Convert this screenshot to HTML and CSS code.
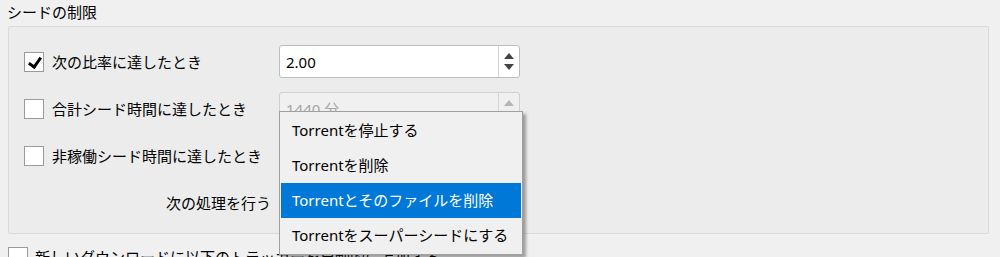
FILE: index.html
```html
<!DOCTYPE html>
<html lang="ja">
<head>
  <meta charset="UTF-8" />
  <title>シードの制限</title>
  <link rel="stylesheet" href="styles.css">
</head>
<body>

  <div class="page">
    <div class="section-title">シードの制限</div>

    <div class="groupbox">
      <div class="grid">
        <label class="check">
          <span class="box checked"></span>
          <span>次の比率に達したとき</span>
        </label>
        <div class="spin">
          <span class="spin-value">2.00</span>
          <span class="spin-arrows">
            <span class="arrow up"></span>
            <span class="arrow down"></span>
          </span>
        </div>

        <label class="check">
          <span class="box"></span>
          <span>合計シード時間に達したとき</span>
        </label>
        <div class="spin disabled">
          <span class="spin-value">1440 分</span>
          <span class="spin-arrows">
            <span class="arrow up"></span>
            <span class="arrow down"></span>
          </span>
        </div>

        <label class="check">
          <span class="box"></span>
          <span>非稼働シード時間に達したとき</span>
        </label>
        <!-- covered by the open dropdown -->
        <div class="spin disabled"></div>

        <div class="action-label">次の処理を行う</div>
        <div class="combo"></div>
      </div>
    </div>

    <label class="check outer">
      <span class="box"></span>
      <span>新しいダウンロードに以下のトラッカーを自動的に追加する</span>
    </label>

    <ul class="popup">
      <li>Torrentを停止する</li>
      <li>Torrentを削除</li>
      <li class="selected">Torrentとそのファイルを削除</li>
      <li>Torrentをスーパーシードにする</li>
    </ul>
  </div>

</body>
</html>
```

FILE: styles.css
```css
* {
  box-sizing: border-box;
}
html, body {
  margin: 0;
  padding: 0;
  height: 257px;
  overflow: hidden;
}
body {
  font-family: "Noto Sans", "Noto Sans CJK JP", sans-serif;
  font-size: 15px;
  color: #000;
  background: #f0f0f0;
}
.page {
  position: relative;
  height: 257px;
}
.section-title {
  height: 26px;
  line-height: 24px;
  padding-left: 7px;
}
.groupbox {
  margin-left: 8px;
  width: 981px;
  height: 208px;
  border: 1px solid #dadada;
  border-radius: 2px;
  background: #ececec;
  padding: 18px 0 0 15px;
}
.grid {
  display: grid;
  grid-template-columns: 255px 241px;
  grid-auto-rows: 33px;
  row-gap: 14px;
  align-items: center;
}
.check {
  display: flex;
  align-items: center;
  gap: 8px;
}
.box {
  width: 20px;
  height: 20px;
  border: 1px solid #9a9a9a;
  background: #fff;
  position: relative;
  flex-shrink: 0;
}
.box.checked::after {
  content: "";
  position: absolute;
  left: 6px;
  top: 2px;
  width: 5px;
  height: 10px;
  border: solid #000;
  border-width: 0 3px 3px 0;
  transform: rotate(35deg);
}
.spin, .combo {
  height: 33px;
  border: 1px solid #bdbdbd;
  border-radius: 3px;
  background: #fff;
  display: flex;
  align-items: center;
}
.spin-value {
  flex: 1;
  padding-left: 6px;
}
.spin-arrows {
  width: 21px;
  height: 100%;
  border-left: 1px solid #d4d4d4;
  display: flex;
  flex-direction: column;
  align-items: center;
  justify-content: center;
  gap: 5px;
}
.arrow {
  width: 0;
  height: 0;
  border-left: 5px solid transparent;
  border-right: 5px solid transparent;
}
.arrow.up {
  border-bottom: 6px solid #444;
}
.arrow.down {
  border-top: 6px solid #444;
}
.spin.disabled {
  background: #f0f0f0;
  border-color: #cfcfcf;
  color: #a5a5a5;
}
.spin.disabled .arrow.up {
  border-bottom-color: #b5b5b5;
}
.spin.disabled .arrow.down {
  border-top-color: #b5b5b5;
}
.action-label {
  text-align: right;
  padding-right: 8px;
}
.check.outer {
  margin: 12px 0 0 8px;
  gap: 7px;
}
.popup {
  position: absolute;
  left: 279px;
  top: 111px;
  width: 244px;
  margin: 0;
  padding: 1px;
  list-style: none;
  background: #f0f0f0;
  border: 1px solid #a0a0a0;
  box-shadow: 3px 3px 3px rgba(0,0,0,0.35);
}
.popup li {
  height: 35px;
  line-height: 35px;
  padding-left: 11px;
}
.popup li.selected {
  background: #0078d7;
  color: #fff;
}
```
